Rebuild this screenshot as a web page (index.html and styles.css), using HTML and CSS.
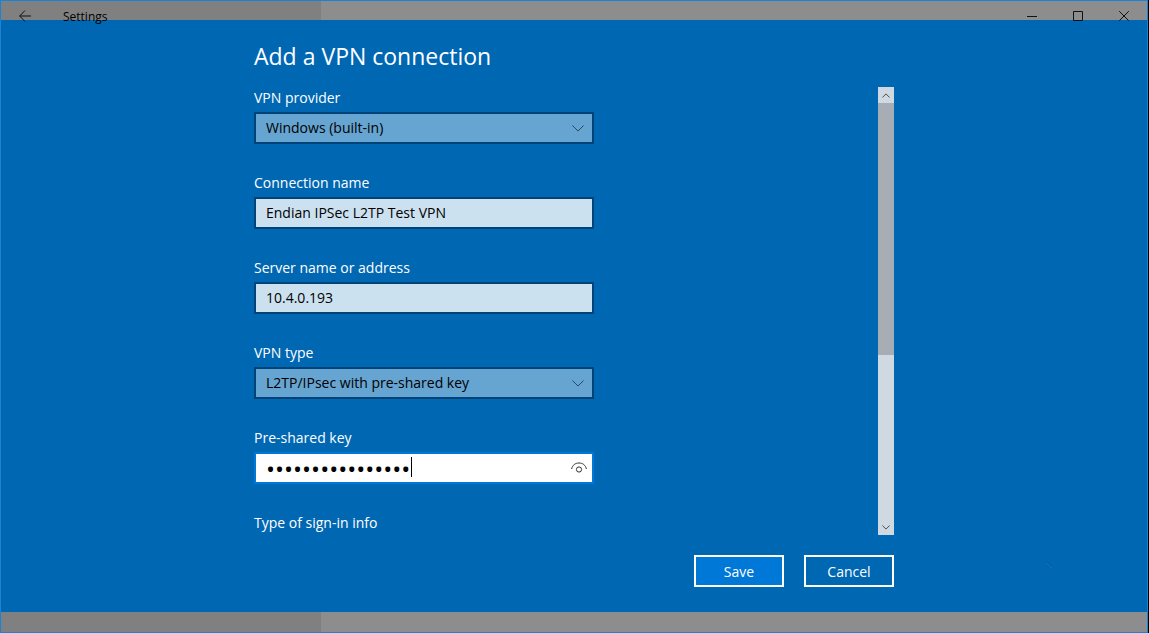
FILE: index.html
```html
<!DOCTYPE html>
<html lang="en">
<head>
<meta charset="utf-8">
<title>Settings</title>
<link rel="stylesheet" href="styles.css">
</head>
<body>
<div class="window">
  <header class="titlebar">
    <button class="tb-button back" type="button" aria-label="Back">
      <svg width="12" height="12" viewBox="0 0 12 12"><path d="M6 .5 .7 6 6 11.500M.7 6H12"/></svg>
    </button>
    <span class="app-name">Settings</span>
    <button class="tb-button" type="button" aria-label="Minimize">
      <svg width="10" height="11" viewBox="0 0 10 11"><path d="M0 5.500H10"/></svg>
    </button>
    <button class="tb-button" type="button" aria-label="Maximize">
      <svg width="10" height="10" viewBox="0 0 10 10"><path d="M.5 .5H9.500V9.500H.5Z"/></svg>
    </button>
    <button class="tb-button" type="button" aria-label="Close">
      <svg width="10" height="10" viewBox="0 0 10 10"><path d="M.2 .2 9.800 9.800M9.800 .2 .2 9.800"/></svg>
    </button>
  </header>
  <main class="dialog">
    <form class="content">
      <h1 class="title">Add a VPN connection</h1>
      <div class="scroller">
        <div class="fields">
          <div class="field">
            <label for="provider">VPN provider</label>
            <div class="control">
              <select id="provider" class="box select"><option>Windows (built-in)</option></select>
              <svg class="chevron" width="12" height="7" viewBox="0 0 12 7"><path d="M.4 .5 6 6 11.600 .5"/></svg>
            </div>
          </div>
          <div class="field">
            <label for="name">Connection name</label>
            <input id="name" class="box text" type="text" value="Endian IPSec L2TP Test VPN">
          </div>
          <div class="field">
            <label for="server">Server name or address</label>
            <input id="server" class="box text" type="text" value="10.4.0.193">
          </div>
          <div class="field">
            <label for="type">VPN type</label>
            <div class="control">
              <select id="type" class="box select"><option>L2TP/IPsec with pre-shared key</option></select>
              <svg class="chevron" width="12" height="7" viewBox="0 0 12 7"><path d="M.4 .5 6 6 11.600 .5"/></svg>
            </div>
          </div>
          <div class="field">
            <label for="key">Pre-shared key</label>
            <div class="control">
              <input id="key" class="box key" type="password" value="0123456789abcdef">
              <span class="caret"></span>
              <button class="reveal" type="button" aria-label="Show key">
                <svg width="16" height="12" viewBox="0 0 16 12"><path d="M.6 8C1.500 4 4.300 2 8 2s6.500 2 7.400 6"/><circle cx="8" cy="8.500" r="2.600"/></svg>
              </button>
            </div>
          </div>
          <div class="field"><span>Type of sign-in info</span></div>
        </div>
        <div class="scrollbar">
          <button class="scroll-button" type="button" aria-label="Scroll up">
            <svg width="8" height="5" viewBox="0 0 8 5"><path d="M.4 4.500 4 .9 7.600 4.500"/></svg>
          </button>
          <div class="track"><div class="thumb"></div></div>
          <button class="scroll-button" type="button" aria-label="Scroll down">
            <svg width="8" height="5" viewBox="0 0 8 5"><path d="M.4 .5 4 4.100 7.600 .5"/></svg>
          </button>
        </div>
      </div>
      <div class="actions">
        <button class="action primary" type="button">Save</button>
        <button class="action" type="button">Cancel</button>
      </div>
    </form>
    <svg class="speck" width="8" height="8" viewBox="0 0 8 8"><path class="speck-dark" d="M1 1 7 6"/><path class="speck-light" d="M1 2 6 7"/></svg>
  </main>
</div>
</body>
</html>
```
FILE: styles.css
```css
* {
  box-sizing: border-box;
}

body {
  margin: 0;
  padding-right: 1px;
  background: #000;
  font-family: "Open Sans", "Noto Sans", sans-serif;
  font-size: 14px;
  line-height: 22px;
  color: #fff;
}

button,
input,
select {
  margin: 0;
  padding: 0;
  border: 0;
  border-radius: 0;
  background: none;
  color: inherit;
  font: inherit;
}

svg {
  display: block;
  fill: none;
  stroke: currentColor;
}

.window {
  display: flex;
  flex-direction: column;
  height: 100vh;
  border: 1px solid #1883d7;
  background: linear-gradient(to right, #808080 320px, #8d8d8d 320px);
}

.titlebar {
  display: flex;
  align-items: flex-start;
  height: 19px;
  color: #111;
  z-index: 1;
}

.tb-button {
  display: flex;
  align-items: center;
  justify-content: center;
  width: 46px;
  height: 30px;
}

.back {
  width: 48px;
  color: #111;
}

.app-name {
  flex: 1;
  padding: 5px 14px;
  font-size: 12px;
  color: #000;
}

.dialog {
  position: relative;
  flex: 1;
  min-height: 0;
  margin-bottom: 20px;
  padding: 20px 20px 25px;
  background: #0067b3;
}

.content {
  display: flex;
  flex-direction: column;
  max-width: 640px;
  height: 100%;
  margin: 0 auto;
}

.title {
  margin: 0 0 15px;
  font-size: 23px;
  font-weight: 400;
  line-height: 32px;
}

.scroller {
  display: flex;
  flex: 1;
  justify-content: space-between;
  min-height: 0;
}

.fields {
  display: flex;
  flex-direction: column;
  gap: 28px;
  width: 340px;
}

.field {
  display: flex;
  flex-direction: column;
  gap: 3px;
}

.control {
  position: relative;
  display: flex;
}

.box {
  width: 100%;
  height: 32px;
  padding: 0 10px;
  border: 2px solid #004378;
  background: #cce1f0;
  color: #000;
  outline: 0;
}

.text {
  padding-bottom: 2px;
}

.select {
  appearance: none;
  background: #66a4d1;
}

.chevron {
  position: absolute;
  top: 13px;
  right: 10px;
  color: #2c4a60;
  pointer-events: none;
}

.key {
  border-color: #0078d7;
  background: #fff;
  font-size: 24px;
  caret-color: transparent;
}

.caret {
  position: absolute;
  top: 5px;
  left: 157px;
  width: 1px;
  height: 20px;
  background: #000;
}

.reveal {
  position: absolute;
  top: 9px;
  right: 7px;
  color: #333;
}

.scrollbar {
  display: flex;
  flex-direction: column;
  width: 16px;
  background: #cfd9e2;
  color: #4a5055;
}

.scroll-button {
  display: flex;
  align-items: center;
  justify-content: center;
  height: 16px;
}

.track {
  flex: 1;
}

.thumb {
  height: 60.5%;
  background: #a6adb4;
}

.actions {
  display: flex;
  justify-content: flex-end;
  gap: 20px;
  margin-top: 20px;
}

.action {
  width: 90px;
  height: 32px;
  padding-top: 2px;
  border: 2px solid #fff;
}

.primary {
  background: #0078d7;
}

.speck {
  position: absolute;
  right: 93px;
  bottom: 43px;
}

.speck-dark {
  stroke: #00589f;
}

.speck-light {
  stroke: #2b7fc0;
  stroke-dasharray: 1 1;
}
```
